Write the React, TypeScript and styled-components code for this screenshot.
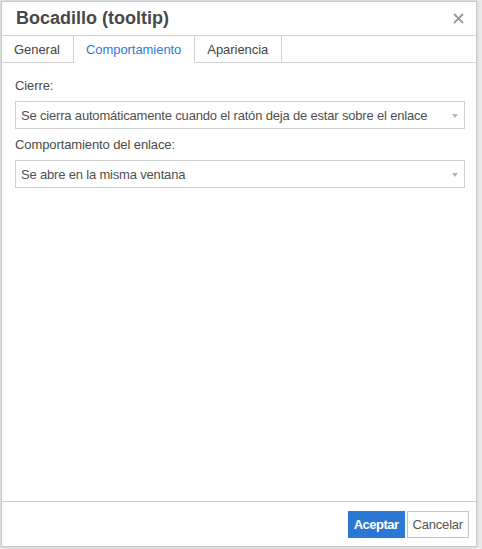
import styled, { createGlobalStyle } from 'styled-components';

const GlobalStyle = createGlobalStyle`
  html, body {
    margin: 0;
    padding: 0;
    background: #e9e9e9;
    font-family: "Liberation Sans", Arial, sans-serif;
  }
`;

const StyledPage = styled.div`
  width: 482px;
  height: 549px;
  padding: 1px 0 0 1px;
  box-sizing: border-box;
`;

const StyledDialog = styled.div`
  display: flex;
  flex-direction: column;
  width: 476px;
  height: 546px;
  box-sizing: border-box;
  background: #fff;
  border: 1px solid #c9c9c9;
  box-shadow: 0 0 3px rgba(0, 0, 0, 0.15);
`;

const StyledTitleBar = styled.header`
  display: flex;
  align-items: center;
  justify-content: space-between;
  height: 33px;
  padding: 0 10px 0 14px;
  border-bottom: 1px solid #d1d1d1;
  box-sizing: content-box;
`;

const StyledTitle = styled.h1`
  margin: 0;
  font-size: 18px;
  font-weight: 700;
  color: #484848;
`;

const StyledClose = styled.button`
  display: flex;
  align-items: center;
  justify-content: center;
  width: 16px;
  height: 16px;
  padding: 0;
  border: none;
  background: none;
  cursor: pointer;
`;

const StyledTabs = styled.nav`
  display: flex;
  height: 26px;
  border-bottom: 1px solid #d1d1d1;
`;

type TypeStyledTab = {
  $active?: boolean;
};

const StyledTab = styled.div<TypeStyledTab>`
  display: flex;
  align-items: center;
  padding: 0 13px 0 12px;
  font-size: 13px;
  letter-spacing: -0.05px;
  color: ${({ $active }: TypeStyledTab) => ($active ? '#2f7bd4' : '#444')};
  background: #fff;
  border-right: 1px solid #d1d1d1;
  margin-bottom: ${({ $active }: TypeStyledTab) => ($active ? '-1px' : '0')};
  cursor: pointer;
`;

const StyledBody = styled.main`
  flex: 1;
  display: flex;
  flex-direction: column;
  padding: 15px 11px 0 13px;
`;

const StyledLabel = styled.label`
  font-size: 13px;
  letter-spacing: -0.1px;
  color: #4a4a4a;
  line-height: 16px;
  margin-bottom: 7px;
`;

const StyledSelect = styled.div`
  display: flex;
  align-items: center;
  justify-content: space-between;
  height: 26px;
  padding: 0 6px 0 5px;
  margin-bottom: 8px;
  border: 1px solid #cfcfcf;
  font-size: 13px;
  letter-spacing: -0.18px;
  color: #505050;
  background: #fff;
`;

const StyledCaret = styled.span`
  width: 0;
  height: 0;
  border-left: 3.5px solid transparent;
  border-right: 3.5px solid transparent;
  border-top: 4px solid #b5b5b5;
  margin-top: 1px;
`;

const StyledFooter = styled.footer`
  display: flex;
  justify-content: flex-end;
  gap: 2px;
  height: 45px;
  padding: 9px 7px 0 0;
  box-sizing: border-box;
  border-top: 1px solid #cbcbcb;
`;

type TypeStyledButton = {
  $primary?: boolean;
};

const StyledButton = styled.button<TypeStyledButton>`
  height: 27px;
  padding: 0 5px;
  font-family: "Liberation Sans", Arial, sans-serif;
  font-size: 13px;
  font-weight: ${({ $primary }: TypeStyledButton) => ($primary ? 700 : 400)};
  letter-spacing: ${({ $primary }: TypeStyledButton) => ($primary ? '-0.5px' : '-0.2px')};
  color: ${({ $primary }: TypeStyledButton) => ($primary ? '#fff' : '#555')};
  background: ${({ $primary }: TypeStyledButton) => ($primary ? '#2a78d3' : '#fff')};
  border: 1px solid ${({ $primary }: TypeStyledButton) => ($primary ? '#2a78d3' : '#c4c4c4')};
  cursor: pointer;
`;

const tabs = ['General', 'Comportamiento', 'Apariencia'];

export default function App() {
  return (
    <StyledPage>
      <GlobalStyle />
      <StyledDialog>
        <StyledTitleBar>
          <StyledTitle>Bocadillo (tooltip)</StyledTitle>
          <StyledClose aria-label="Cerrar">
            <svg width="11" height="11" viewBox="0 0 11 11">
              <path d="M1 1 L10 10 M10 1 L1 10" stroke="#9a9a9a" strokeWidth="1.8" />
            </svg>
          </StyledClose>
        </StyledTitleBar>
        <StyledTabs>
          {tabs.map((tab) => (
            <StyledTab key={tab} $active={tab === 'Comportamiento'}>{tab}</StyledTab>
          ))}
        </StyledTabs>
        <StyledBody>
          <StyledLabel>Cierre:</StyledLabel>
          <StyledSelect>
            Se cierra automáticamente cuando el ratón deja de estar sobre el enlace
            <StyledCaret />
          </StyledSelect>
          <StyledLabel>Comportamiento del enlace:</StyledLabel>
          <StyledSelect>
            Se abre en la misma ventana
            <StyledCaret />
          </StyledSelect>
        </StyledBody>
        <StyledFooter>
          <StyledButton $primary>Aceptar</StyledButton>
          <StyledButton>Cancelar</StyledButton>
        </StyledFooter>
      </StyledDialog>
    </StyledPage>
  );
};
